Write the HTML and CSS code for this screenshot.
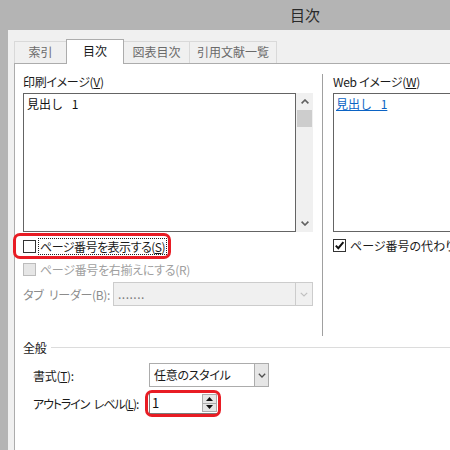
FILE: index.html
```html
<!DOCTYPE html>
<html lang="ja">
<head>
<meta charset="utf-8">
<title>目次</title>
<link rel="stylesheet" href="styles.css">
</head>
<body>
<div class="window">
  <div class="titlebar"><span class="title">目次</span></div>
  <div class="client">
    <div class="tabs">
      <div class="tab t1">索引</div>
      <div class="tab t2 active">目次</div>
      <div class="tab t3">図表目次</div>
      <div class="tab t4">引用文献一覧</div>
    </div>
    <div class="panel">
      <div class="upper">
        <div class="col-left">
          <div class="label">印刷イメージ(<u>V</u>)</div>
          <div class="preview-row">
            <div class="preview"><span class="heading-text">見出し 1</span></div>
            <div class="scrollbar">
              <div class="sb-arrow"><svg width="8" height="5" viewBox="0 0 8 5"><path d="M0.6 4.4 L4 1 L7.4 4.4" fill="none" stroke="#606060" stroke-width="1.6"/></svg></div>
              <div class="sb-thumb"></div>
              <div class="sb-track"></div>
              <div class="sb-arrow"><svg width="8" height="5" viewBox="0 0 8 5"><path d="M0.6 0.6 L4 4 L7.4 0.6" fill="none" stroke="#606060" stroke-width="1.6"/></svg></div>
            </div>
          </div>
          <div class="check-row first">
            <div class="hl">
              <span class="checkbox"></span>
              <span class="check-label focus">ページ番号を表示する(<u>S</u>)</span>
            </div>
          </div>
          <div class="check-row disabled">
            <span class="checkbox"></span>
            <span class="check-label">ページ番号を右揃えにする(R)</span>
          </div>
          <div class="leader-row">
            <span class="leader-label">タブ リーダー(B):</span>
            <div class="select disabled-select">
              <span class="select-text">.......</span>
              <span class="select-btn"><svg width="8" height="5" viewBox="0 0 8 5"><path d="M0.8 0.8 L4 4 L7.2 0.8" fill="none" stroke="#c0c0c0" stroke-width="1.2"/></svg></span>
            </div>
          </div>
        </div>
        <div class="sep"></div>
        <div class="col-right">
          <div class="label">Web イメージ(<u>W</u>)</div>
          <div class="webbox"><span class="link">見出し 1</span></div>
          <div class="check-row first">
            <span class="checkbox checked"><svg width="11" height="11" viewBox="0 0 11 11"><path d="M1.8 5.6 L4.3 8.2 L9.4 2.2" fill="none" stroke="#111" stroke-width="2"/></svg></span>
            <span class="check-label wide">ページ番号の代わりにハイパーリンクを使う(H)</span>
          </div>
        </div>
      </div>
      <div class="general">
        <div class="group-head"><span>全般</span><span class="group-line"></span></div>
        <div class="form-grid">
          <span class="form-label">書式(<u>T</u>):</span>
          <div class="select format-select">
            <span class="select-text">任意のスタイル</span>
            <span class="select-btn"><svg width="8" height="5" viewBox="0 0 8 5"><path d="M0.8 0.8 L4 4 L7.2 0.8" fill="none" stroke="#505050" stroke-width="1.3"/></svg></span>
          </div>
          <span class="form-label outline-label">アウトライン レベル(<u>L</u>):</span>
          <div class="spin">
            <span class="spin-text">1</span>
            <span class="spin-btns">
              <span class="spin-btn"><svg width="7" height="4" viewBox="0 0 7 4"><path d="M0 4 L3.5 0 L7 4 Z" fill="#111"/></svg></span>
              <span class="spin-btn"><svg width="7" height="4" viewBox="0 0 7 4"><path d="M0 0 L3.5 4 L7 0 Z" fill="#111"/></svg></span>
            </span>
          </div>
        </div>
      </div>
    </div>
  </div>
</div>
</body>
</html>
```
FILE: styles.css
```css
* { box-sizing: border-box; }
html, body {
  margin: 0;
  padding: 0;
  width: 450px;
  height: 450px;
  overflow: hidden;
  background: #b4b4b4;
}
body {
  font-family: "Noto Sans CJK JP", "Meiryo UI", sans-serif;
  font-size: 12px;
  color: #1a1a1a;
  font-feature-settings: "palt";
  letter-spacing: -0.3px;
}
u { text-decoration: underline; text-underline-offset: 1px; }

.window {
  width: 610px;
  height: 450px;
  display: flex;
  flex-direction: column;
  background: #b4b4b4;
}
.titlebar {
  height: 30px;
  display: flex;
  align-items: center;
  justify-content: center;
  flex: none;
}
.title {
  font-size: 15px;
  line-height: 18px;
  color: #2a2a2a;
  font-feature-settings: normal;
  letter-spacing: 0;
}
.client {
  flex: 1;
  margin-left: 8px;
  background: #f0f0f0;
  padding-top: 9px;
  display: flex;
  flex-direction: column;
}
.tabs {
  display: flex;
  align-items: flex-end;
  height: 24px;
  padding-left: 6px;
  position: relative;
  z-index: 2;
}
.tab {
  height: 22px;
  border: 1px solid #d9d9d9;
  border-bottom: none;
  background: #f0f0f0;
  color: #6a6a6a;
  line-height: 20px;
  text-align: center;
  font-feature-settings: normal;
  letter-spacing: 0;
  margin-left: -1px;
}
.t1 { width: 53px; margin-left: 0; }
.t2 { width: 58px; }
.t3 { width: 67px; }
.t4 { width: 88px; }
.tab.active {
  height: 25px;
  margin-bottom: -1px;
  background: #fff;
  border-color: #acacac;
  color: #1a1a1a;
  line-height: 21px;
  position: relative;
  z-index: 3;
}
.panel {
  flex: 1;
  margin-left: 6px;
  background: #fff;
  border-top: 1px solid #acacac;
  border-left: 1px solid #acacac;
  padding-top: 10px;
}
.upper {
  display: flex;
  align-items: flex-start;
}
.col-left {
  width: 290px;
  margin-left: 8px;
}
.label {
  line-height: 16px;
  height: 16px;
}
.preview-row {
  margin-top: 3px;
  display: flex;
  height: 139px;
}
.preview {
  width: 273px;
  height: 139px;
  border: 1px solid #646464;
  padding: 2px 3px;
  line-height: 16px;
}
.heading-text {
  font-feature-settings: normal;
  letter-spacing: 0;
  word-spacing: 6px;
  color: #111;
}
.scrollbar {
  width: 17px;
  height: 139px;
  background: #f0f0f0;
  display: flex;
  flex-direction: column;
}
.sb-arrow {
  height: 17px;
  display: flex;
  align-items: center;
  justify-content: center;
  flex: none;
}
.sb-thumb {
  height: 17px;
  margin: 0 1px;
  background: #cdcdcd;
  flex: none;
}
.sb-track { flex: 1; }

.check-row {
  display: flex;
  align-items: center;
  height: 20px;
  margin-top: 3px;
}
.check-row.first { margin-top: 4px; }
.hl {
  display: inline-flex;
  align-items: center;
  height: 20px;
  position: relative;
}
.hl::after {
  content: "";
  position: absolute;
  top: -3px;
  left: -10px;
  right: -4px;
  bottom: -3px;
  border: 3px solid #e81c24;
  border-radius: 7px;
}
.checkbox {
  width: 13px;
  height: 13px;
  border: 1px solid #333;
  background: #fff;
  flex: none;
  display: flex;
  align-items: center;
  justify-content: center;
}
.check-label {
  margin-left: 2px;
  padding: 0 1px;
  line-height: 15px;
  white-space: nowrap;
  border: 1px solid transparent;
}
.check-label.focus {
  border: 1px dotted #222;
  letter-spacing: -0.5px;
}
.check-label.wide { letter-spacing: 0; }
.disabled { color: #a0a0a0; }
.disabled .checkbox {
  background: #e6e6e6;
  border-color: #bcbcbc;
}
.leader-row {
  display: flex;
  align-items: center;
  margin-top: 3px;
  height: 24px;
}
.leader-label {
  width: 90px;
  color: #8c8c8c;
  white-space: nowrap;
  word-spacing: 3px;
}
.select {
  display: flex;
  align-items: stretch;
  height: 24px;
  border: 1px solid #acacac;
  background: #fff;
}
.select-text {
  flex: 1;
  padding-left: 4px;
  line-height: 22px;
  white-space: nowrap;
}
.select-btn {
  width: 15px;
  display: flex;
  align-items: center;
  justify-content: center;
  background: #e6e6e6;
  border-left: 1px solid #acacac;
}
.disabled-select {
  width: 200px;
  background: #f0f0f0;
  border-color: #cccccc;
}
.disabled-select .select-text { color: #7a7a7a; letter-spacing: 0.5px; }
.disabled-select .select-btn {
  width: 17px;
  background: #f0f0f0;
  border-left: 1px solid #cccccc;
}
.sep {
  width: 1px;
  height: 262px;
  background: #a0a0a0;
  margin-left: 9px;
  flex: none;
}
.col-right {
  width: 270px;
  margin-left: 10px;
}
.webbox {
  margin-top: 3px;
  height: 139px;
  border: 1px solid #646464;
  padding: 2px 2px;
  line-height: 16px;
}
.link {
  color: #0b63c4;
  text-decoration: underline;
  font-feature-settings: normal;
  letter-spacing: 0;
  word-spacing: 6px;
}
.col-right .check-row.first { margin-top: 3px; }
.col-right .check-label { margin-left: 2px; }

.general { margin-top: 4px; }
.group-head {
  display: flex;
  align-items: center;
  padding-left: 8px;
  line-height: 16px;
  height: 16px;
}
.group-line {
  flex: 1;
  height: 1px;
  background: #dcdcdc;
  margin-left: 5px;
  margin-top: -1px;
}
.form-grid {
  margin-top: 7px;
  padding-left: 18px;
  display: grid;
  grid-template-columns: 116px auto;
  row-gap: 5px;
  align-items: center;
  justify-content: start;
}
.form-label { white-space: nowrap; }
.outline-label { letter-spacing: -1.1px; word-spacing: 3px; }
.format-select { width: 120px; }
.format-select .select-btn { width: 14px; }
.spin {
  width: 70px;
  height: 22px;
  border: 1px solid #7a7a7a;
  background: #fff;
  display: flex;
  position: relative;
}
.spin::after {
  content: "";
  position: absolute;
  top: -3px;
  left: -5px;
  right: -3px;
  bottom: -4px;
  border: 3px solid #e81c24;
  border-radius: 7px;
}
.spin-text {
  flex: 1;
  padding-left: 2px;
  line-height: 20px;
  font-size: 13px;
  color: #111;
}
.spin-btns {
  width: 15px;
  margin: 1px;
  display: flex;
  flex-direction: column;
}
.spin-btn {
  flex: 1;
  background: #e6e6e6;
  border: 1px solid #acacac;
  display: flex;
  align-items: center;
  justify-content: center;
}
.spin-btn + .spin-btn { border-top: none; }
```
